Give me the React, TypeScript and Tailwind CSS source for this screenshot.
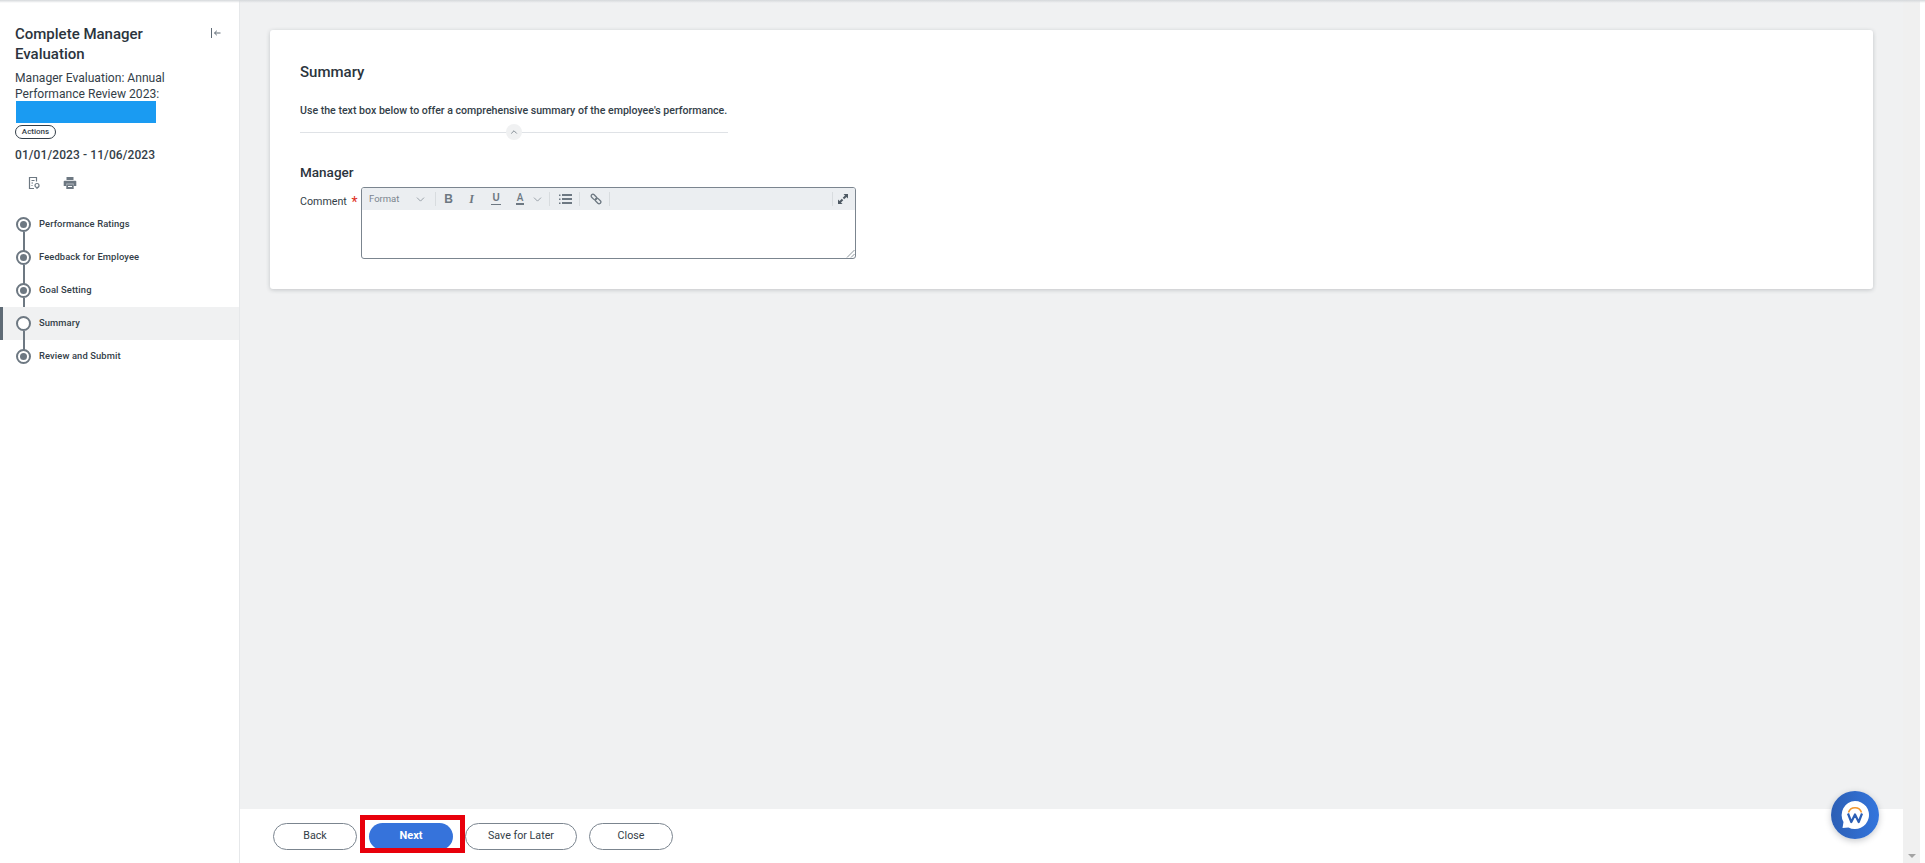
import { ChevronDown, ChevronUp } from "lucide-react";

const steps = [
  { label: "Performance Ratings", done: true },
  { label: "Feedback for Employee", done: true },
  { label: "Goal Setting", done: true },
  { label: "Summary", done: false },
  { label: "Review and Submit", done: true },
];

function Sidebar() {
  return (
    <aside className="w-[240px] shrink-0 bg-white border-r border-[#e6e8ea] text-[#333e48]">
      <div className="pl-[15px] pr-3 pt-[24px]">
        <div className="flex justify-between">
          <h1 className="w-[150px] text-[15px] leading-[20px] font-medium text-[#2b343d]">Complete Manager Evaluation</h1>
          <svg width="12" height="12" viewBox="0 0 12 12" className="mt-[3px] mr-[5px] text-[#5e6a75]" fill="none" stroke="currentColor" strokeWidth="1">
            <path d="M1.500 1v10M10.500 6H4.500M6.800 3.800 4.500 6l2.300 2.200" />
          </svg>
        </div>
        <p className="mt-[6px] w-[170px] text-[12.100px] leading-[16px] text-[#333e48]">Manager Evaluation: Annual Performance Review 2023:</p>
        <div className="-mt-px ml-px h-[22px] w-[140px] bg-[#1a9bf2]" />
        <button className="mt-[2px] block h-[14px] w-[41px] rounded-full border border-[#333e48] text-center text-[8px] leading-[12px] font-medium">Actions</button>
        <p className="mt-[8px] text-[12px] leading-[16px] font-medium tracking-[0.1px]">01/01/2023 - 11/06/2023</p>
        <div className="mt-[13px] flex items-center gap-[22px] pl-[12px] text-[#6d7882]">
          <svg width="14" height="14" viewBox="0 0 14 14" fill="none" stroke="currentColor" strokeWidth="1.200">
            <path d="M7 12.500H2.500v-11h7v4M4.500 4.500h3M4.500 7h1.500M4.500 9.500h1" />
            <circle cx="10" cy="9.500" r="2" />
            <path d="M10 11.500v1.500" />
          </svg>
          <svg width="14" height="14" viewBox="0 0 14 14" fill="currentColor">
            <path d="M3.500 1h7v3h-7z" />
            <path fillRule="evenodd" d="M1.500 4.800h11a.8.8 0 0 1 .8.8V10h-2.600V7.800H3.300V10H.7V5.600a.8.8 0 0 1 .8-.8z" />
            <path fillRule="evenodd" d="M3.300 8.300h7.400V13H3.300zM5 10v1h4v-1z" />
          </svg>
        </div>
      </div>
      <ol className="mt-[18px]">
        {steps.map((step, i) => (
          <li key={step.label} className={`relative flex h-[33px] items-center border-l-[3px] pl-[13px] ${step.done ? "border-transparent" : "border-[#5e6a75] bg-[#f0f1f2]"}`}>
            {i < steps.length - 1 && <span className="absolute left-[20px] top-[24px] h-[20px] w-[1.500px] bg-[#6d7882]" />}
            <span className="relative flex h-[15px] w-[15px] items-center justify-center rounded-full border-2 border-[#6d7882] bg-white">
              {step.done && <span className="h-[7px] w-[7px] rounded-full bg-[#6d7882]" />}
            </span>
            <span className="ml-[8px] text-[9.400px] font-medium tracking-[0.1px] text-[#333e48]">{step.label}</span>
          </li>
        ))}
      </ol>
    </aside>
  );
}

function Toolbar() {
  return (
    <div className="flex h-[22px] items-center bg-[#ebeef1] text-[#6d7882]">
      <span className="ml-[7px] w-[34px] text-[9.500px] text-[#7b858f]">Format</span>
      <ChevronDown size={13} className="ml-[11px]" strokeWidth={1.200} />
      <span className="ml-[8px] h-[14px] w-px bg-[#d8dcdf]" />
      <span className="ml-[8px] w-[9px] text-center font-['Liberation_Sans',sans-serif] text-[12px] font-bold">B</span>
      <span className="ml-[14px] w-[9px] text-center font-['Liberation_Serif',serif] text-[12px] font-bold italic">I</span>
      <span className="ml-[15px] h-[12px] w-[10px] border-b-[1.500px] border-[#6d7882] text-center font-['Liberation_Sans',sans-serif] text-[10px] leading-[10px] font-bold">U</span>
      <span className="ml-[15px] h-[12px] w-[8px] border-b-[2px] border-[#6d7882] text-center text-[10px] leading-[10px] font-medium">A</span>
      <ChevronDown size={13} className="ml-[7px]" strokeWidth={1.200} />
      <span className="ml-[5px] h-[14px] w-px bg-[#d8dcdf]" />
      <svg width="13" height="10" viewBox="0 0 13 10" className="ml-[9px]" fill="currentColor">
        <path d="M3 0h10v2H3zM3 4h10v2H3zM3 8h10v2H3zM0 .500h1.500V2H0zM0 4.500h1.500V6H0zM0 8.500h1.500V10H0z" />
      </svg>
      <span className="ml-[7px] h-[14px] w-px bg-[#d8dcdf]" />
      <svg width="12" height="12" viewBox="0 0 12 12" className="ml-[10px]" fill="none" stroke="currentColor" strokeWidth="1.300">
        <rect x="0.800" y="2.300" width="6.500" height="3.500" rx="1.700" transform="rotate(45 4 4)" />
        <rect x="4.700" y="6.200" width="6.500" height="3.500" rx="1.700" transform="rotate(45 8 8)" />
      </svg>
      <span className="ml-[7px] h-[14px] w-px bg-[#d8dcdf]" />
      <span className="ml-auto h-[14px] w-px bg-[#d8dcdf]" />
      <svg width="10" height="10" viewBox="0 0 11 11" className="ml-[5px] mr-[7px] text-[#4f5a64]" fill="currentColor">
        <path d="M6 0h5v5L9.300 3.300 6.800 5.800 5.200 4.200l2.500-2.500zM0 11V6l1.700 1.700 2.500-2.500 1.600 1.600-2.500 2.500L5 11z" />
      </svg>
    </div>
  );
}

function Card() {
  return (
    <section className="mx-[30px] mt-[30px] h-[259px] rounded-[3px] bg-white px-[30px] pt-[32px] shadow-[0_1px_4px_rgba(30,40,50,0.22)]">
      <h2 className="text-[15px] leading-[20px] font-medium text-[#2b343d]">Summary</h2>
      <p className="mt-[21px] text-[10.600px] leading-[16px] font-medium text-[#333e48]">
        Use the text box below to offer a comprehensive summary of the employee's performance.
      </p>
      <div className="relative mt-[13px] h-px w-[428px] bg-[#dfe2e6]">
        <span className="absolute left-[206px] top-[-8px] flex h-[16px] w-[16px] items-center justify-center rounded-full bg-[#f0f1f2] text-[#6d7882]">
          <ChevronUp size={10} />
        </span>
      </div>
      <h3 className="mt-[29px] text-[13.500px] leading-[20px] font-medium text-[#2b343d]">Manager</h3>
      <div className="mt-[5px] flex">
        <label className="w-[61px] pt-[7px] text-[10.700px] leading-[16px] text-[#333e48]">
          Comment <span className="ml-[2px] inline-block translate-y-[2px] text-[14px] leading-[10px] text-[#de2e21]">*</span>
        </label>
        <div className="relative h-[72px] w-[495px] overflow-hidden rounded-[3px] border border-[#7b858f] bg-white">
          <Toolbar />
          <svg width="9" height="9" viewBox="0 0 9 9" className="absolute bottom-0 right-0 text-[#6d7882]" fill="none" stroke="currentColor" strokeWidth="0.800">
            <path d="M1 8.500 8.500 1M5 8.500 8.500 5" />
          </svg>
        </div>
      </div>
    </section>
  );
}

const outlineBtn = "h-[27px] rounded-full border border-[#7b858f] bg-white text-[10.700px] text-[#333e48]";

function Footer() {
  return (
    <footer className="mt-auto flex h-[54px] items-start bg-white pl-[33px] pt-[14px]">
      <button className={`${outlineBtn} w-[84px]`}>Back</button>
      <button className="relative ml-[12px] h-[27px] w-[84px] rounded-full bg-[#3673db] text-[11px] font-bold text-white">
        Next
        <span className="absolute -left-[9px] -right-[12px] -top-[8px] -bottom-[3px] border-[5px] border-[#e8000b]" />
      </button>
      <button className={`${outlineBtn} ml-[12px] w-[112px]`}>Save for Later</button>
      <button className={`${outlineBtn} ml-[12px] w-[84px]`}>Close</button>
    </footer>
  );
}

function ChatBubble() {
  return (
    <div className="absolute left-[1831px] top-[791px] flex h-[48px] w-[48px] items-center justify-center rounded-full bg-gradient-to-r from-[#2c5fb5] to-[#3375dd] shadow-[0_2px_6px_rgba(30,40,50,0.25)]">
      <svg width="30" height="30" viewBox="0 0 30 30">
        <path d="M15 1a14 14 0 1 1-6.500 26.400L2.500 28l1-6A14 14 0 0 1 15 1z" fill="#fff" />
        <path d="M8.500 12.500a6.800 6.800 0 0 1 13 0" fill="none" stroke="#f0952c" strokeWidth="1.500" />
        <path d="M8 13.500 11.300 22l3.700-7.500 3.700 7.500 3.300-8.500" fill="none" stroke="#2c5fb5" strokeWidth="2.200" strokeLinejoin="round" />
      </svg>
    </div>
  );
}

export default function App() {
  return (
    <div className="relative flex h-[863px] w-full overflow-hidden bg-white font-['Roboto',sans-serif]">
      <Sidebar />
      <main className="flex min-w-0 flex-1 flex-col bg-[#f0f1f2]">
        <Card />
        <Footer />
      </main>
      <div className="relative w-[17px] shrink-0 bg-[#f0f0f0]">
        <span className="absolute bottom-[5px] left-[5px] h-0 w-0 border-x-[4px] border-t-[4px] border-x-transparent border-t-[#a3a3a3]" />
      </div>
      <div className="w-[5px] shrink-0 bg-white" />
      <div className="absolute inset-x-0 top-0 h-[3px] bg-gradient-to-b from-[#d5d8db] to-transparent" />
      <ChatBubble />
    </div>
  );
}
